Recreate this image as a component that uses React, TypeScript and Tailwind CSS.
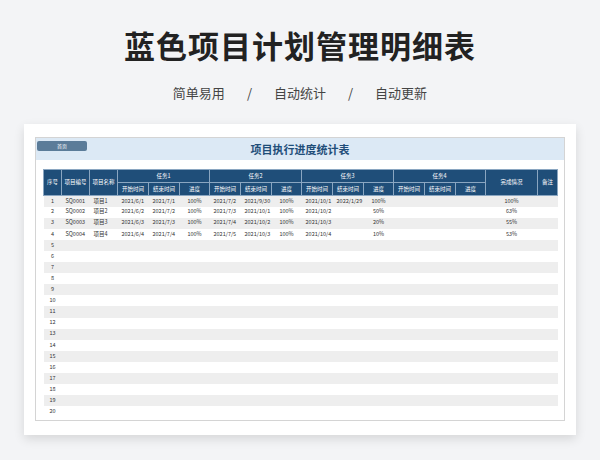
const data: string[][] = [
  ["1","SQ0001","项目1","2021/6/1","2021/7/1","100%","2021/7/2","2021/9/30","100%","2021/10/1","2022/1/29","100%","","","","100%",""],
  ["2","SQ0002","项目2","2021/6/2","2021/7/2","100%","2021/7/3","2021/10/1","100%","2021/10/2","","50%","","","","63%",""],
  ["3","SQ0003","项目3","2021/6/3","2021/7/3","100%","2021/7/4","2021/10/2","100%","2021/10/3","","20%","","","","55%",""],
  ["4","SQ0004","项目4","2021/6/4","2021/7/4","100%","2021/7/5","2021/10/3","100%","2021/10/4","","10%","","","","53%",""],
];
const widths = [18,28,28,31,31,30,31,31,30,31,31,30,31,31,30,52,20];
const F = { fontFamily: '"Noto Sans CJK SC", "Noto Sans", sans-serif' };

export default function App() {
  const rows = Array.from({ length: 20 }, (_, i) => data[i] ?? [String(i + 1), ...Array(16).fill("")]);
  const sub = ["开始时间", "结束时间", "进度"];
  return (
    <div className="w-[600px] h-[460px] bg-[#f3f4f6] overflow-hidden flex flex-col items-center" style={F}>
      <div className="mt-[25px] text-[31px] font-bold text-[#222] leading-[40px] tracking-[1px]">蓝色项目计划管理明细表</div>
      <div className="mt-[18px] text-[13px] text-[#444] flex gap-[22px] leading-[20px]">
        <span>简单易用</span><span>/</span><span>自动统计</span><span>/</span><span>自动更新</span>
      </div>
      <div className="mt-[21px] w-[552px] h-[311px] bg-white shadow-[0_4px_10px_rgba(0,0,0,0.12)] pt-[13px] px-[11px]">
        <div className="h-[284px] border border-[#d4d4d4] bg-white">
          <div className="h-[22px] bg-[#dce9f5] relative flex items-center justify-center">
            <div className="absolute left-[1px] top-[3px] w-[50px] h-[10px] bg-[#5b7c99] rounded-[2px] text-[5px] text-white flex items-center justify-center">首页</div>
            <span className="text-[11px] font-bold text-[#1f4e79]">项目执行进度统计表</span>
          </div>
          <div className="px-[7px] pt-[9px]">
            <table className="border-collapse text-[5.5px] text-[#333] table-fixed" style={{ width: 514 }}>
              <colgroup>{widths.map((w, i) => <col key={i} style={{ width: w }} />)}</colgroup>
              <thead className="text-white bg-[#1f4e79]">
                <tr className="h-[13px]">
                  <th rowSpan={2} className="font-normal border border-[#8aa6c1]">序号</th>
                  <th rowSpan={2} className="font-normal border border-[#8aa6c1]">项目编号</th>
                  <th rowSpan={2} className="font-normal border border-[#8aa6c1]">项目名称</th>
                  {["任务1","任务2","任务3","任务4"].map(t => <th key={t} colSpan={3} className="font-normal border border-[#8aa6c1]">{t}</th>)}
                  <th rowSpan={2} className="font-normal border border-[#8aa6c1]">完成情况</th>
                  <th rowSpan={2} className="font-normal border border-[#8aa6c1]">备注</th>
                </tr>
                <tr className="h-[13px]">
                  {[0,1,2,3].flatMap(k => sub.map(s => <th key={k + s} className="font-normal border border-[#8aa6c1]">{s}</th>))}
                </tr>
              </thead>
              <tbody>
                {rows.map((r, i) => (
                  <tr key={i} className={`h-[11.1px] ${i % 2 === 0 ? "bg-[#eeeeee]" : "bg-white"}`}>
                    {r.map((c, j) => (
                      <td key={j} className={`p-0 leading-none whitespace-nowrap ${j === 1 || j === 2 || (j >= 3 && j <= 14 && j % 3 !== 2) ? "text-left pl-[4px]" : "text-center"}`}>{c}</td>
                    ))}
                  </tr>
                ))}
              </tbody>
            </table>
          </div>
        </div>
      </div>
    </div>
  );
}
